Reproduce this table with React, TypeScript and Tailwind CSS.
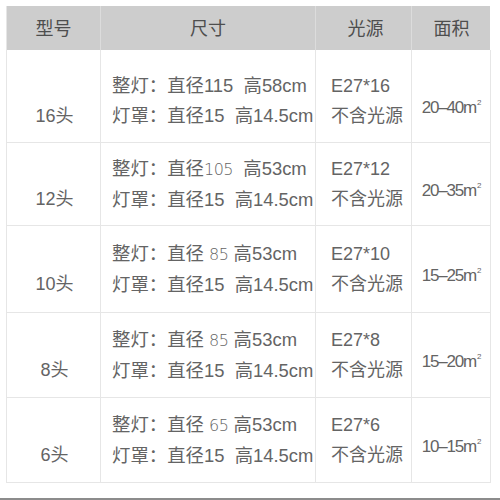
import React from "react";

type Row = {
  model: string;
  whole: React.ReactNode;
  bulb: string;
  area: string;
  h: string;
  shift: string;
};

const thin = (s: string) => <span className="font-['DejaVu_Sans'] font-extralight text-[16px] tracking-[-0.03em]">{s}</span>;

const rows: Row[] = [
  { model: "16头", whole: <>整灯：直径115&nbsp;&nbsp;高58cm</>, bulb: "E27*16", area: "20–40", h: "h-[93px]", shift: "pt-[10px]" },
  { model: "12头", whole: <>整灯：直径{thin("105")}&nbsp;&nbsp;高53cm</>, bulb: "E27*12", area: "20–35", h: "h-[83px]", shift: "pt-0" },
  { model: "10头", whole: <>整灯：直径&nbsp;{thin("85")}&nbsp;高53cm</>, bulb: "E27*10", area: "15–25", h: "h-[87px]", shift: "pt-0" },
  { model: "8头", whole: <>整灯：直径&nbsp;{thin("85")}&nbsp;高53cm</>, bulb: "E27*8", area: "15–20", h: "h-[85px]", shift: "pt-0" },
  { model: "6头", whole: <>整灯：直径&nbsp;{thin("65")}&nbsp;高53cm</>, bulb: "E27*6", area: "10–15", h: "h-[85px]", shift: "pt-0" },
];

const cell = "border-r border-b border-[#e6e6e6] flex flex-col justify-center";

const App = () => {
  return (
    <div className="w-[500px] h-[500px] bg-white overflow-hidden font-['Liberation_Sans','Noto_Sans_CJK_SC',sans-serif] text-[#646464]">
      <div className="pt-[6px] pl-[6px]">
        <div className="w-[484px] border-l border-[#e6e6e6]">
          <div className="grid grid-cols-[94px_215px_96px_79px] h-[44px] bg-[#cdcdcd] text-[18px] text-[#4e4e4e]">
            <div className="flex items-center justify-center pt-[3px] border-r border-[#dcdcdc]">型号</div>
            <div className="flex items-center justify-center pt-[3px] border-r border-[#dcdcdc]">尺寸</div>
            <div className="flex items-center justify-center pt-[3px] pl-[4px] border-r border-[#dcdcdc]">光源</div>
            <div className="flex items-center justify-center pt-[3px]">面积</div>
          </div>
          {rows.map((r) => (
            <div key={r.model} className={`grid grid-cols-[94px_215px_96px_79px] ${r.h}`}>
              <div className={`${cell} items-center text-[18px] leading-[30px] ${r.shift}`}>
                <div>&nbsp;</div>
                <div className="pl-[2px]">{r.model}</div>
              </div>
              <div className={`${cell} pl-[11px] text-[18.4px] leading-[30px] whitespace-nowrap ${r.shift}`}>
                <div>{r.whole}</div>
                <div>灯罩：直径15&nbsp;&nbsp;高14.5cm</div>
              </div>
              <div className={`${cell} pl-[15px] text-[18px] leading-[30px] whitespace-nowrap ${r.shift}`}>
                <div>{r.bulb}</div>
                <div>不含光源</div>
              </div>
              <div className={`${cell} items-center ${r.shift}`}>
                <div className="pt-[12px] text-[17px] tracking-[-0.07em] leading-none">
                  {r.area}m<sup className="text-[8px] -top-[1em] ml-[1px]">2</sup>
                </div>
              </div>
            </div>
          ))}
        </div>
        <div className="mt-[15px] -ml-[6px] w-[500px] h-[2px] bg-[#8c8c8c]" />
      </div>
    </div>
  );
};

export default App;
